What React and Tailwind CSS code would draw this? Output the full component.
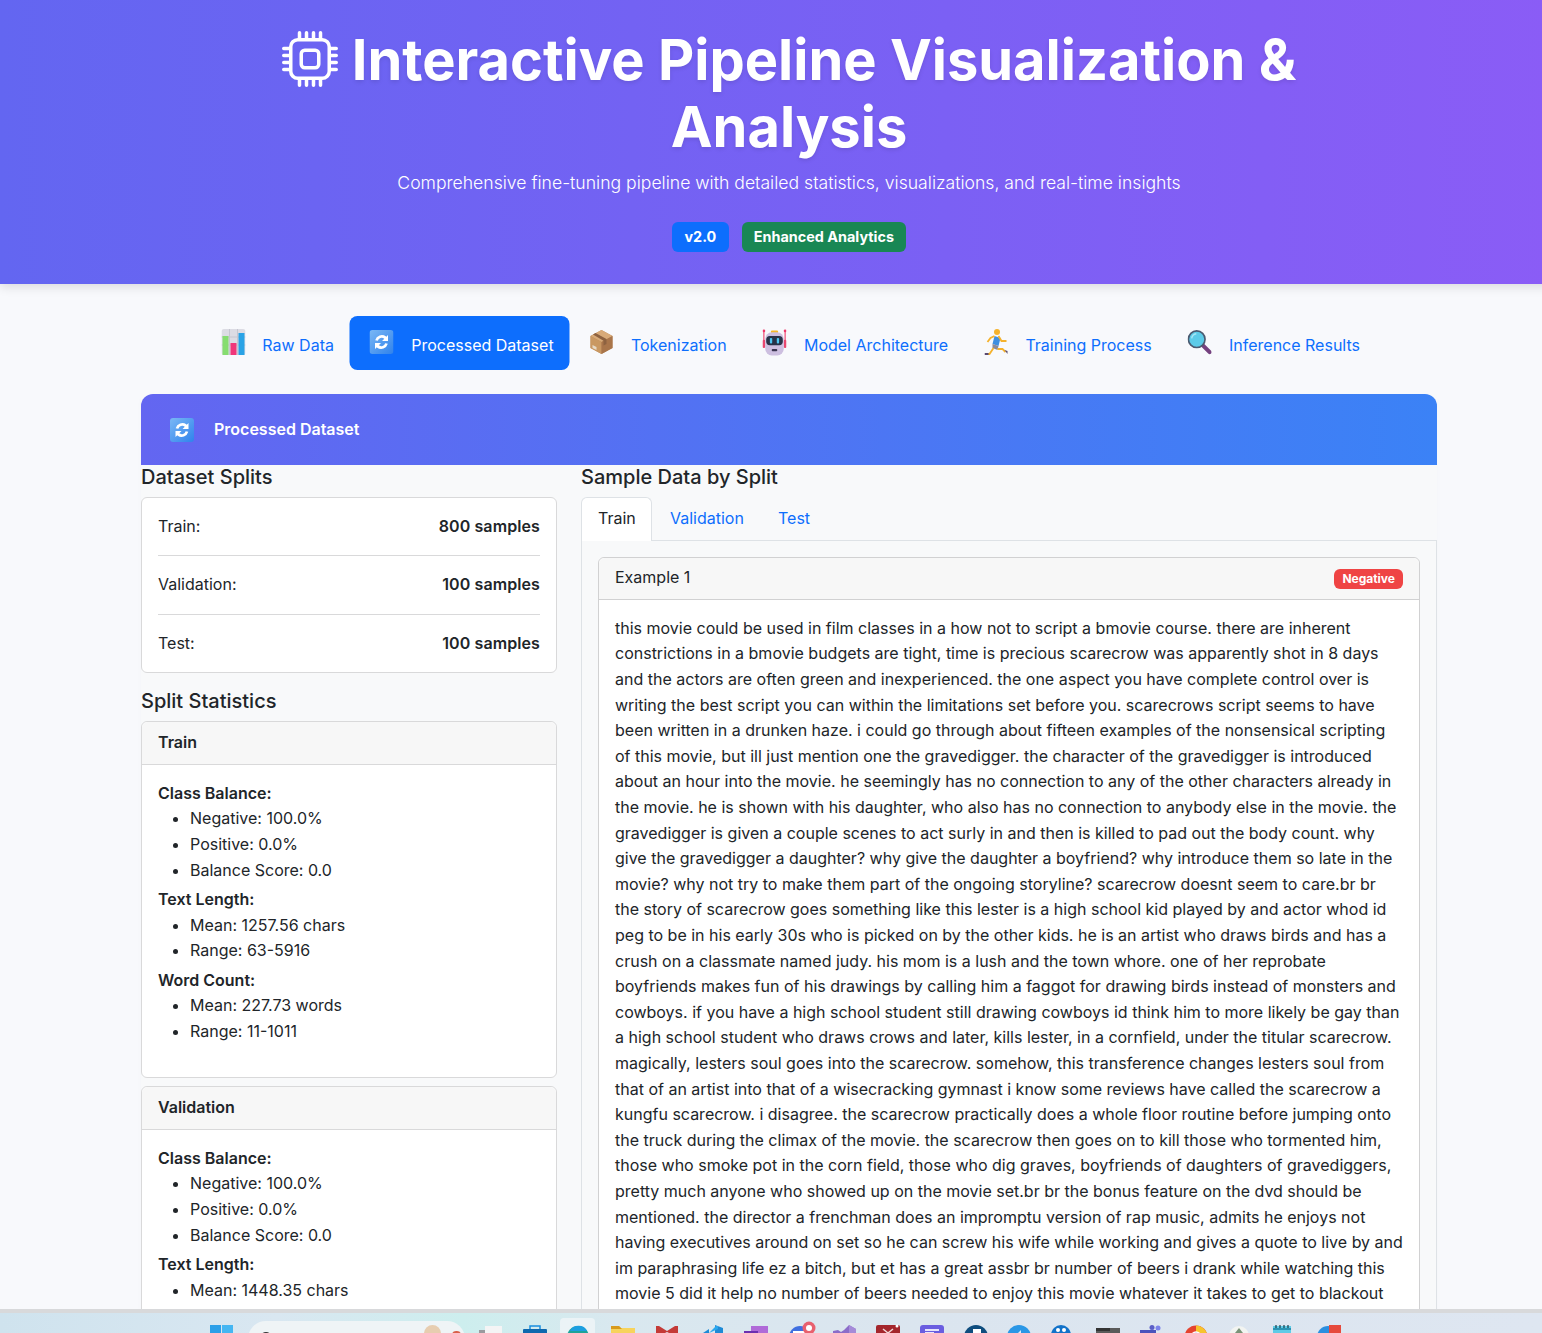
import React from "react";
import { BsCpu } from "react-icons/bs";

const TEXT = "this movie could be used in film classes in a how not to script a bmovie course. there are inherent constrictions in a bmovie budgets are tight, time is precious scarecrow was apparently shot in 8 days and the actors are often green and inexperienced. the one aspect you have complete control over is writing the best script you can within the limitations set before you. scarecrows script seems to have been written in a drunken haze. i could go through about fifteen examples of the nonsensical scripting of this movie, but ill just mention one the gravedigger. the character of the gravedigger is introduced about an hour into the movie. he seemingly has no connection to any of the other characters already in the movie. he is shown with his daughter, who also has no connection to anybody else in the movie. the gravedigger is given a couple scenes to act surly in and then is killed to pad out the body count. why give the gravedigger a daughter? why give the daughter a boyfriend? why introduce them so late in the movie? why not try to make them part of the ongoing storyline? scarecrow doesnt seem to care.br br the story of scarecrow goes something like this lester is a high school kid played by and actor whod id peg to be in his early 30s who is picked on by the other kids. he is an artist who draws birds and has a crush on a classmate named judy. his mom is a lush and the town whore. one of her reprobate boyfriends makes fun of his drawings by calling him a faggot for drawing birds instead of monsters and cowboys. if you have a high school student still drawing cowboys id think him to more likely be gay than a high school student who draws crows and later, kills lester, in a cornfield, under the titular scarecrow. magically, lesters soul goes into the scarecrow. somehow, this transference changes lesters soul from that of an artist into that of a wisecracking gymnast i know some reviews have called the scarecrow a kungfu scarecrow. i disagree. the scarecrow practically does a whole floor routine before jumping onto the truck during the climax of the movie. the scarecrow then goes on to kill those who tormented him, those who smoke pot in the corn field, those who dig graves, boyfriends of daughters of gravediggers, pretty much anyone who showed up on the movie set.br br the bonus feature on the dvd should be mentioned. the director a frenchman does an impromptu version of rap music, admits he enjoys not having executives around on set so he can screw his wife while working and gives a quote to live by and im paraphrasing life ez a bitch, but et has a great assbr br number of beers i drank while watching this movie 5 did it help no number of beers needed to enjoy this movie whatever it takes to get to blackout";

const Chart = () => (
  <svg viewBox="0 0 24 26" className="h-[26px] w-6">
    <rect x="0" y="0" width="24" height="26" rx="2.500" fill="#dcdce4" />
    <path d="M8 0v26M16 0v26M0 8h24M0 16h24" stroke="#c6c6d0" strokeWidth="1" />
    <rect x="1" y="7" width="6" height="19" fill="#86dd70" />
    <rect x="9" y="14" width="6" height="12" fill="#f0367a" />
    <rect x="17" y="4" width="6" height="22" fill="#2aa3e6" />
  </svg>
);
const Refresh = ({ id }) => (
  <svg viewBox="0 0 24 24" className="h-6 w-6">
    <defs>
      <linearGradient id={id} x1="0" y1="0" x2="1" y2="1">
        <stop offset="0" stopColor="#7ab8f5" />
        <stop offset="1" stopColor="#2f82ec" />
      </linearGradient>
    </defs>
    <rect x="0" y="0" width="24" height="24" rx="3" fill={`url(#${id})`} />
    <path d="M7 10.500a5.500 5.500 0 0 1 8.500-3l1 1M17 13.500a5.500 5.500 0 0 1-8.500 3l-1-1" fill="none" stroke="#fff" strokeWidth="2.800" />
    <path d="M18.500 5v6h-6zM5.500 19v-6h6z" fill="#fff" />
  </svg>
);
const Box = () => (
  <svg viewBox="0 0 24 26" className="h-[26px] w-6">
    <path d="M12 1 23 7v12l-11 6-11-6V7z" fill="#b98a5a" />
    <path d="M12 1 23 7 12 13 1 7z" fill="#d8aa78" />
    <path d="M1 7 12 13v12L1 19z" fill="#c99862" />
    <path d="M12 13 23 7v12l-11 6z" fill="#a9754a" />
    <path d="M6 4l11 6v5l-3 1.600V11.800L3.500 5.500z" fill="#8d6240" />
    <path d="M3 16l4 2v3l-4-2z" fill="#e6d9c6" />
  </svg>
);
const Robot = () => (
  <svg viewBox="0 0 26 28" className="h-[27px] w-[25px]">
    <path d="M1.500 1v16M24.500 1v16" stroke="#ef3d6b" strokeWidth="1.200" />
    <circle cx="1.500" cy="1.500" r="1.500" fill="#f0386b" />
    <circle cx="24.500" cy="1.500" r="1.500" fill="#f0386b" />
    <rect x="0" y="11" width="3" height="9" rx="1.500" fill="#e8476f" />
    <rect x="23" y="11" width="3" height="9" rx="1.500" fill="#e8476f" />
    <rect x="9" y="1" width="8" height="3" rx="1.500" fill="#f5b829" />
    <rect x="3" y="3" width="20" height="25" rx="7" fill="#cdbfe0" />
    <rect x="4" y="7" width="18" height="10" rx="4" fill="#273348" />
    <rect x="8" y="9" width="2.500" height="6" rx="1" fill="#4ec6f2" />
    <rect x="15.500" y="9" width="2.500" height="6" rx="1" fill="#4ec6f2" />
    <rect x="10" y="21" width="6" height="2.500" rx="1" fill="#3b3550" />
  </svg>
);
const Runner = () => (
  <svg viewBox="0 0 24 26" className="h-[26px] w-6">
    <circle cx="12.500" cy="3" r="3" fill="#f5b22c" />
    <path d="M10 7 8 15l6 2 2-8z" fill="#3f8fe0" />
    <path d="M14 7l3 5 5 0M10 7 6 9l-3 4" fill="none" stroke="#f5b22c" strokeWidth="1.800" />
    <path d="M8 15l6 2-1 4-5-2z" fill="#8a8a98" />
    <path d="M9 19 5 25H1M13 20l5 0 3 3" fill="none" stroke="#f5b22c" strokeWidth="1.800" />
    <path d="M0 24h4v2H0zM20 21l3 1v3z" fill="#5a4a70" />
  </svg>
);
const Glass = () => (
  <svg viewBox="0 0 26 26" className="h-[26px] w-[26px]">
    <path d="M15 15l9 9" stroke="#75417f" strokeWidth="4.500" strokeLinecap="round" />
    <circle cx="10" cy="10" r="9" fill="#5ccbe8" stroke="#4a5a70" strokeWidth="1.800" />
    <path d="M4.500 9a6 6 0 0 1 5-5" stroke="#a6e6f5" strokeWidth="1.500" fill="none" />
  </svg>
);

const TABS = [
  ["Raw Data", <Chart />],
  ["Processed Dataset", <Refresh id="r1" />, true],
  ["Tokenization", <Box />],
  ["Model Architecture", <Robot />],
  ["Training Process", <Runner />],
  ["Inference Results", <Glass />],
];

const Stat = ({ title, lines }) => (
  <div className="mb-2 rounded-md border border-[#d9d9da] bg-white">
    <div className="h-[42.600px] rounded-t-md border-b border-[#d9d9da] bg-[#f7f7f7] px-4 py-2 font-semibold leading-[25px] text-[#212529]">{title}</div>
    <div className="p-4">
      {lines.map(([h, items], i) => (
        <div key={h} className={i === lines.length - 1 ? "mb-[16.600px]" : "mb-1"}>
          <div className="font-semibold">{h}</div>
          <ul className="list-disc pl-8">
            {items.map((t) => <li key={t}>{t}</li>)}
          </ul>
        </div>
      ))}
    </div>
  </div>
);

const Ico = ({ children }) => (
  <svg viewBox="0 0 24 10" width="24" height="10" className="block shrink-0 overflow-visible">{children}</svg>
);
const ICONS = [
  <><rect x="0" y="5" width="8" height="5" fill="#9a9a9e" /><rect x="6" y="1" width="17" height="9" fill="#f4f4f5" /></>,
  <><path d="M7 4V1h10v3" stroke="#1a8fe0" strokeWidth="1.500" fill="none" /><rect x="0" y="4" width="24" height="6" rx="1" fill="#0e68ae" /></>,
  <><circle cx="11" cy="12" r="11" fill="#1da39a" /><path d="M3 6a9 8 0 0 1 17 0z" fill="#1c9fe0" /></>,
  <><path d="M0 10V1h8l2 2h14v7z" fill="#f7d35c" /><path d="M0 4V1h8l3 3z" fill="#d89a1c" /></>,
  <><path d="M1 10V1l3 0 8 5 8-5 3 0v9z" fill="#c43a37" /><path d="M6 10l6-3 6 3z" fill="#dfe6ee" /></>,
  <><path d="M16 0l8 3v7h-8zM1 10l9-6v6z" fill="#1e8ad6" /><path d="M10 8 17 1h2v3z" fill="#2aa7ee" /></>,
  <><rect x="7" y="1" width="17" height="9" fill="#b06ad8" /><rect x="0" y="6" width="14" height="4" fill="#6b2fb0" /></>,
  <><circle cx="12" cy="12" r="11" fill="#3f6fe0" /><rect x="5" y="6" width="12" height="2.500" fill="#fff" /><circle cx="21" cy="3" r="6.500" fill="#e8606e" /><circle cx="21" cy="3" r="3" fill="#fff" /></>,
  <><path d="M12 5 17 0l7 4v6H1V6l5-1 3 2z" fill="#8b6cc9" /><path d="M17 0l7 4v6h-7z" fill="#a58bd8" /></>,
  <><rect x="0" y="0" width="24" height="10" rx="2" fill="#a4262c" /><path d="M7 4l5 4 5-4" stroke="#f1d9d9" strokeWidth="1.500" fill="none" /><circle cx="21" cy="1" r="1.500" fill="#fff" /></>,
  <><rect x="0" y="0" width="24" height="10" rx="3" fill="#6a5de0" /><rect x="5" y="4" width="14" height="2" fill="#e6e4fb" /><rect x="5" y="7" width="9" height="2" fill="#e6e4fb" /></>,
  <><circle cx="12" cy="12" r="12" fill="#0f4d7e" /><rect x="9" y="4" width="8" height="6" fill="#fff" /></>,
  <><circle cx="11" cy="12" r="12" fill="#2a97e6" /><path d="M10 8l3-3v5" fill="#d6ecfb" /></>,
  <><circle cx="9" cy="10" r="10" fill="#1272c9" /><circle cx="6" cy="5" r="2" fill="#fff" /><circle cx="12" cy="5" r="2" fill="#fff" /></>,
  <><rect x="0" y="3" width="24" height="7" fill="#5a5a5a" /><rect x="0" y="3" width="14" height="3" fill="#333" /></>,
  <><circle cx="18" cy="3" r="2.500" fill="#7b83eb" /><circle cx="12" cy="2.500" r="2.500" fill="#5b5fc7" /><rect x="0" y="5" width="16" height="5" fill="#4b53bc" /></>,
  <><circle cx="11" cy="12" r="11.500" fill="#e5432f" /><path d="M11 .5a11.500 11.500 0 0 1 11 8H11z" fill="#f7c42c" /><circle cx="11" cy="12" r="5" fill="#4285f4" stroke="#fff" strokeWidth="1.500" /></>,
  <><circle cx="10" cy="11" r="10" fill="#f2f4f1" /><path d="M10 3l4 5H6z" fill="#7a9378" /></>,
  <><rect x="0" y="1" width="18" height="9" fill="#5fcbe6" /><rect x="0" y="3" width="18" height="2" fill="#2a93b3" /><path d="M3 0v3M7 0v3M11 0v3M15 0v3" stroke="#173b4a" strokeWidth="1.200" /></>,
  <><circle cx="11" cy="12" r="11" fill="#2b8fe0" /><rect x="12" y="0" width="12" height="10" fill="#e64a3d" /></>,
];

const Taskbar = () => (
  <div className="relative h-[24px] shrink-0 overflow-hidden border-t-4 border-[#d8d9db] bg-[linear-gradient(90deg,#cfe3ee_0%,#d9e7f1_18%,#cdeeee_30%,#d9e8ef_40%,#dbe5ef_60%,#dee6f1_100%)]">
    <div className="flex h-full items-start pl-[210px] pt-[12px]">
      <div className="grid h-[8px] w-[23px] shrink-0 grid-cols-2 gap-[1px]"><span className="bg-[#2b9fe8]" /><span className="bg-[#45b6f2]" /></div>
      <div className="relative ml-[15px] mt-[-4px] h-[30px] w-[217px] shrink-0 rounded-t-[18px] bg-[#eff4f6] pl-[12px] pt-[9px] font-['Inter'] text-[12px] leading-none text-[#444]">
        <div className="flex items-center gap-[13px]">
          <span className="h-[12px] w-[12px] rounded-full border-2 border-[#333]" />
          <span className="pt-[3px]">Search</span>
        </div>
        <span className="absolute left-[176px] top-[4px] h-[12px] w-[17px] rounded-t-full bg-[#e7cdb0]" />
        <span className="absolute left-[204px] top-[10px] h-[4px] w-[9px] rounded-t-full bg-[#d9604a]" />
      </div>
      <div className="ml-[14px] flex shrink-0 gap-[20.100px]">
        {ICONS.map((ic, i) => (
          <div key={i} className="relative">
            {i === 2 && <span className="absolute -left-[7px] -top-[7px] h-[30px] w-[35px] rounded bg-[#f4f7f9]/70" />}
            <span className="relative block"><Ico>{ic}</Ico></span>
          </div>
        ))}
      </div>
    </div>
  </div>
);

export default function App() {
  return (
    <div className="flex h-[1333px] w-[1542px] flex-col overflow-hidden bg-[#f8f9fc] font-['Inter',sans-serif] text-[16px] leading-[25.600px] text-[#212529]">
      <div className="min-h-0 flex-1 overflow-hidden">
        <div className="w-[1578px]">
          <header className="relative h-[284px] bg-[linear-gradient(90deg,#6366f1,#8b5cf6)] pt-[27px] text-center text-white shadow-[0_3px_10px_rgba(0,0,0,0.12)]">
            <h1 className="mx-auto max-w-[1100px] text-[56px] font-bold leading-[67.200px] [text-shadow:0_2px_4px_rgba(0,0,0,0.1)]">
              <BsCpu className="mr-[14px] inline-block align-[-7px] text-[56px]" />
              Interactive Pipeline Visualization &amp; Analysis
            </h1>
            <p className="mt-[8px] text-[17.600px] font-light leading-[28px] text-white">
              Comprehensive fine-tuning pipeline with detailed statistics, visualizations, and real-time insights
            </p>
            <div className="mt-[25px] flex justify-center gap-[13px] text-[14.400px] font-bold leading-[17px]">
              <span className="rounded-md bg-[#0d6efd] px-[12.500px] pb-[7px] pt-[6px]">v2.0</span>
              <span className="rounded-md bg-[#198754] px-3 pb-[7px] pt-[6px]">Enhanced Analytics</span>
            </div>
          </header>

          <div className="mx-auto w-[1296px]">
            <nav className="mt-[32px] flex -translate-x-[0.5px] justify-center">
              {TABS.map(([label, icon, active]) => (
                <div key={label} className={`flex h-[54px] items-center rounded-lg pl-[20px] pr-4 ${active ? "bg-[#0d6efd] text-white" : "text-[#0d6efd]"}`}>
                  <span className="flex w-6 -translate-y-[1px] justify-center">{icon}</span>
                  <span className="ml-[17.300px] translate-y-[3px]">{label}</span>
                </div>
              ))}
            </nav>

            <section className="mt-[24px] bg-[#f8f9fa] shadow-[0_4px_6px_rgba(0,0,0,0.02)]">
              <div className="flex h-[71px] items-center rounded-t-xl bg-[linear-gradient(90deg,#6366f1,#3b82f6)] pl-[29px] font-semibold text-white">
                <Refresh id="r2" />
                <span className="ml-5">Processed Dataset</span>
              </div>
              <div className="flex gap-6">
                <div className="w-[416px] shrink-0">
                  <h5 className="mb-2 text-[20px] font-medium leading-6">Dataset Splits</h5>
                  <div className="mb-4 rounded-md border border-[#d9d9da] bg-white px-4">
                    {[["Train:", "800 samples"], ["Validation:", "100 samples"], ["Test:", "100 samples"]].map(([a, b], i) => (
                      <div key={a} className={`flex justify-between py-[15.900px] ${i < 2 ? "border-b border-[#d9d9da]" : ""}`}>
                        <span>{a}</span>
                        <span className="font-semibold tracking-[0.1px]">{b}</span>
                      </div>
                    ))}
                  </div>
                  <h5 className="mb-2 text-[20px] font-medium leading-6">Split Statistics</h5>
                  <Stat title="Train" lines={[
                    ["Class Balance:", ["Negative: 100.0%", "Positive: 0.0%", "Balance Score: 0.0"]],
                    ["Text Length:", ["Mean: 1257.56 chars", "Range: 63-5916"]],
                    ["Word Count:", ["Mean: 227.73 words", "Range: 11-1011"]],
                  ]} />
                  <Stat title="Validation" lines={[
                    ["Class Balance:", ["Negative: 100.0%", "Positive: 0.0%", "Balance Score: 0.0"]],
                    ["Text Length:", ["Mean: 1448.35 chars"]],
                  ]} />
                </div>
                <div className="min-w-0 flex-1">
                  <h5 className="mb-2 text-[20px] font-medium leading-6">Sample Data by Split</h5>
                  <div className="relative z-10 flex gap-[2px]">
                    <div className="-mb-px w-[71px] rounded-t-md border border-b-0 border-[#dee2e6] bg-white px-4 py-2 pb-[8.300px]">Train</div>
                    <div className="w-[106px] px-4 py-[8.500px] text-[#0d6efd]">Validation</div>
                    <div className="px-4 py-[8.500px] text-[#0d6efd]">Test</div>
                  </div>
                  <div className="border border-b-0 border-[#dee2e6] p-4">
                    <div className="rounded-md border border-[#d1d1d2] bg-white">
                      <div className="flex h-[42.300px] items-center justify-between rounded-t-md border-b border-[#d1d1d2] bg-[#f7f7f7] px-4">
                        <span>Example 1</span>
                        <span className="mt-[1px] rounded-md bg-[#ef4444] px-2 text-[12px] font-bold leading-[20px] text-white">Negative</span>
                      </div>
                      <div className="p-4">{TEXT}</div>
                    </div>
                  </div>
                </div>
              </div>
            </section>
          </div>
        </div>
      </div>
      <Taskbar />
    </div>
  );
}
